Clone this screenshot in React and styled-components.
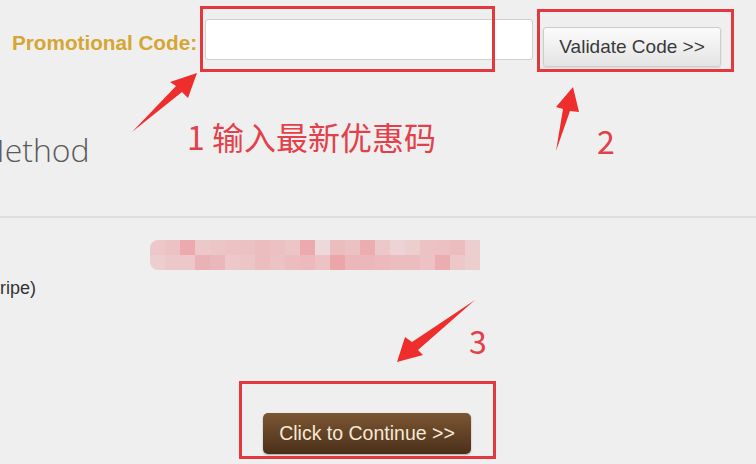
import styled, { createGlobalStyle } from "styled-components";

const GlobalStyle = createGlobalStyle`
    * { box-sizing: border-box; }
    body {
        margin: 0;
        background: #efefef;
        font-family: "Liberation Sans", Arial, sans-serif;
    }
`;

const blurRows = [
    [0.35, 0.4, 0.62, 0.35, 0.38, 0.4, 0.42, 0.45, 0.42, 0.38, 0.62, 0.2, 0.45, 0.42, 0.6, 0.35, 0.25, 0.3, 0.4, 0.42, 0.45, 0.3],
    [0.3, 0.35, 0.35, 0.55, 0.5, 0.35, 0.38, 0.45, 0.4, 0.45, 0.48, 0.4, 0.66, 0.5, 0.5, 0.48, 0.45, 0.45, 0.4, 0.6, 0.35, 0.3],
];

const Page = styled.div`
    position: relative;
    display: flex;
    flex-direction: column;
    width: 756px;
    height: 464px;
    overflow: hidden;
    background: #efefef;
`;

const PromoRow = styled.div`
    display: flex;
    align-items: flex-start;
    padding: 19px 0 0 12px;
`;

const PromoLabel = styled.label`
    margin-top: 3px;
    line-height: 41px;
    font-size: 20.7px;
    font-weight: bold;
    color: #d5a633;
    white-space: nowrap;
`;

const CodeInput = styled.input`
    width: 328px;
    height: 41px;
    margin-left: 8px;
    border: 1px solid #cfcfcf;
    border-radius: 3px;
    background: #fff;
    outline: none;
`;

const ValidateButton = styled.button`
    width: 178px;
    height: 40px;
    margin: 8px 0 0 10px;
    border: 1px solid #cdcdcd;
    border-radius: 3px;
    background: linear-gradient(#fbfbfb, #e4e4e4);
    box-shadow: 0 1px 2px rgba(0, 0, 0, 0.12);
    font-family: inherit;
    font-size: 19px;
    color: #3a3a3a;
`;

const SectionTitle = styled.h2`
    margin: 63px 0 0 -23px;
    font-family: "Open Sans", sans-serif;
    font-weight: 300;
    font-size: 32px;
    line-height: 40px;
    color: #5a5a5a;
    white-space: nowrap;
`;

const Divider = styled.hr`
    width: 100%;
    margin: 46px 0 0;
    border: none;
    border-top: 2px solid #dedede;
`;

const PaymentBody = styled.div`
    display: flex;
    flex-direction: column;
    align-items: flex-start;
    padding-top: 22px;
`;

const Blurred = styled.div`
    display: grid;
    grid-template-columns: repeat(22, 15px);
    grid-auto-rows: 15px;
    margin-left: 150px;
    border-radius: 8px 0 0 8px;
    overflow: hidden;
`;

const BlurCell = styled.div`
    background: rgba(232, 128, 134, ${(p) => p.$a});
`;

const OptionText = styled.div`
    margin: 8px 0 0 -23px;
    font-size: 18px;
    color: #333;
    white-space: nowrap;
`;

const ContinueWrap = styled.div`
    display: flex;
    padding: 114px 0 0 263px;
`;

const ContinueButton = styled.button`
    width: 208px;
    height: 41px;
    border: none;
    border-radius: 5px;
    background: linear-gradient(#7b5633, #4a3019);
    box-shadow: 0 1px 2px rgba(0, 0, 0, 0.3);
    font-family: inherit;
    font-size: 19.5px;
    color: #f6e9d6;
`;

/* annotation layer drawn over the screenshot */
const Frame = styled.div`
    position: absolute;
    left: ${(p) => p.$x}px;
    top: ${(p) => p.$y}px;
    width: ${(p) => p.$w}px;
    height: ${(p) => p.$h}px;
    border: 3px solid #e2383e;
    pointer-events: none;
`;

const Note = styled.span`
    position: absolute;
    left: ${(p) => p.$x}px;
    top: ${(p) => p.$y}px;
    font-family: "Noto Sans CJK SC", "Noto Sans", sans-serif;
    font-size: 32px;
    line-height: 1;
    color: #e3404a;
    white-space: nowrap;
`;

const Arrows = styled.svg`
    position: absolute;
    left: 0;
    top: 0;
    pointer-events: none;
`;

export default function App() {
    return (
        <>
            <GlobalStyle />
            <Page>
                <PromoRow>
                    <PromoLabel>Promotional Code:</PromoLabel>
                    <CodeInput type="text" />
                    <ValidateButton>Validate Code &gt;&gt;</ValidateButton>
                </PromoRow>
                <SectionTitle>Method</SectionTitle>
                <Divider />
                <PaymentBody>
                    <Blurred>
                        {blurRows.map((row, r) =>
                            row.map((a, c) => <BlurCell key={r + "-" + c} $a={a} />)
                        )}
                    </Blurred>
                    <OptionText>(Stripe)</OptionText>
                </PaymentBody>
                <ContinueWrap>
                    <ContinueButton>Click to Continue &gt;&gt;</ContinueButton>
                </ContinueWrap>

                <Frame $x={200} $y={6} $w={295} $h={66} />
                <Frame $x={537} $y={9} $w={197} $h={63} />
                <Frame $x={239} $y={381} $w={257} $h={78} />

                <Arrows width="756" height="464" viewBox="0 0 756 464">
                    <polygon fill="#ee2d2d" points="132,132 176,86 170,82 197,73 188,98 182,92" />
                    <polygon fill="#ee2d2d" points="556,151 563,109 556,107 573,87 579,112 570,111" />
                    <polygon fill="#ee2d2d" points="475,300 412,342 405,337 397,362 423,355 418,350" />
                </Arrows>

                <Note $x={187} $y={120}>1 输入最新优惠码</Note>
                <Note $x={597} $y={124}>2</Note>
                <Note $x={469} $y={324}>3</Note>
            </Page>
        </>
    );
}
